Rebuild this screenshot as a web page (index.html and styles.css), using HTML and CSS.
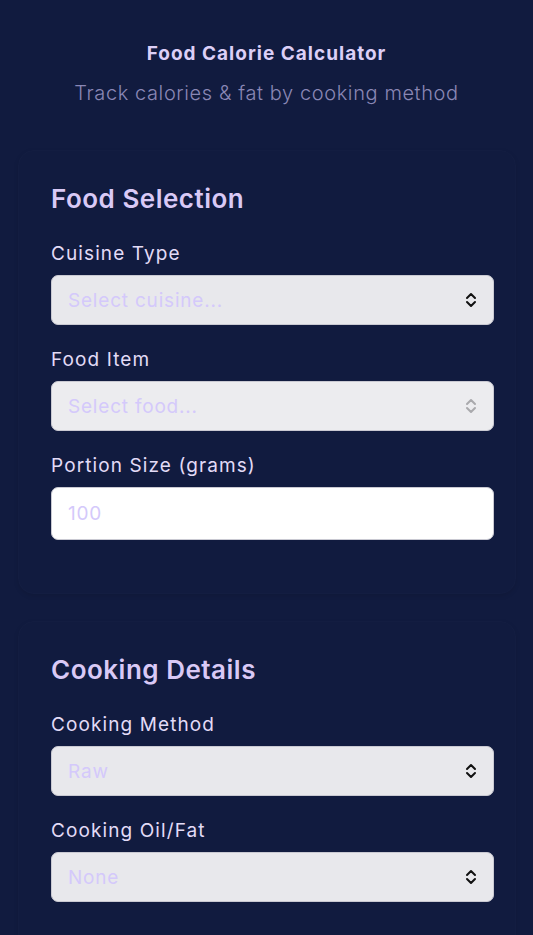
FILE: index.html
```html
<!DOCTYPE html>
<html lang="en">
<head>
    <meta charset="UTF-8">
    <meta name="viewport" content="width=device-width, initial-scale=1.0">
    <title>Food Calorie Calculator</title>
    <link rel="stylesheet" href="styles.css">
</head>
<body>

<div class="header">
    <h1>Food Calorie Calculator</h1>
    <p>Track calories &amp; fat by cooking method</p>
</div>

<div class="card">
    <h2>Food Selection</h2>
    <div class="form-group">
        <label for="cuisine">Cuisine Type</label>
        <div class="select-wrap">
            <select id="cuisine">
                <option value="">Select cuisine...</option>
            </select>
            <svg class="chevrons" width="12" height="16" viewBox="0 0 12 16"><path d="M2 6 L6 2 L10 6 M2 10 L6 14 L10 10" fill="none" stroke="#111" stroke-width="2" stroke-linecap="round" stroke-linejoin="round"/></svg>
        </div>
    </div>
    <div class="form-group">
        <label for="food">Food Item</label>
        <div class="select-wrap">
            <select id="food" disabled>
                <option value="">Select food...</option>
            </select>
            <svg class="chevrons" width="12" height="16" viewBox="0 0 12 16"><path d="M2 6 L6 2 L10 6 M2 10 L6 14 L10 10" fill="none" stroke="#a9a9ad" stroke-width="2" stroke-linecap="round" stroke-linejoin="round"/></svg>
        </div>
    </div>
    <div class="form-group">
        <label for="portion">Portion Size (grams)</label>
        <input type="number" id="portion" placeholder="100">
    </div>
</div>

<div class="card">
    <h2>Cooking Details</h2>
    <div class="form-group">
        <label for="method">Cooking Method</label>
        <div class="select-wrap">
            <select id="method">
                <option value="raw">Raw</option>
            </select>
            <svg class="chevrons" width="12" height="16" viewBox="0 0 12 16"><path d="M2 6 L6 2 L10 6 M2 10 L6 14 L10 10" fill="none" stroke="#111" stroke-width="2" stroke-linecap="round" stroke-linejoin="round"/></svg>
        </div>
    </div>
    <div class="form-group">
        <label for="oil">Cooking Oil/Fat</label>
        <div class="select-wrap">
            <select id="oil">
                <option value="none">None</option>
            </select>
            <svg class="chevrons" width="12" height="16" viewBox="0 0 12 16"><path d="M2 6 L6 2 L10 6 M2 10 L6 14 L10 10" fill="none" stroke="#111" stroke-width="2" stroke-linecap="round" stroke-linejoin="round"/></svg>
        </div>
    </div>
</div>

</body>
</html>
```

FILE: styles.css
```css
body {
    font-family: Inter, "Noto Sans", sans-serif;
    margin: 0;
    padding: 41px 0 40px;
    background-color: #111b3f;
    color: #e3dbf7;
}
.header {
    text-align: center;
    margin-bottom: 43px;
}
.header h1 {
    font-size: 19px;
    line-height: 26px;
    font-weight: 700;
    letter-spacing: 1px;
    color: #dccff7;
    margin: 0 0 12px;
}
.header p {
    font-size: 20px;
    line-height: 28px;
    font-weight: 300;
    letter-spacing: 0.6px;
    color: #8a87b5;
    margin: 0;
}
.card {
    margin: 0 17px 27px 18px;
    padding: 31px 21px 32px 32px;
    border: 1px solid rgba(255, 255, 255, 0.012);
    border-radius: 16px;
    box-shadow: 0 2px 5px rgba(0, 0, 0, 0.1);
}
.card h2 {
    font-size: 26px;
    line-height: 34px;
    font-weight: 600;
    letter-spacing: 0.5px;
    color: #d9c9f6;
    margin: 0 0 24px;
}
.form-group {
    margin-bottom: 21px;
}
label {
    display: block;
    font-size: 19px;
    line-height: 28px;
    letter-spacing: 1.1px;
    margin-bottom: 7px;
    color: #e3dbf7;
}
.select-wrap {
    position: relative;
}
select, input {
    display: block;
    width: 100%;
    box-sizing: border-box;
    font-family: inherit;
    font-size: 19px;
    letter-spacing: 0.8px;
    color: #d4c9fb;
    border: 1px solid #c9c9d2;
    border-radius: 7px;
    padding: 0 16px;
    outline: none;
}
select {
    appearance: none;
    -webkit-appearance: none;
    height: 50px;
    background-color: #e8e8ec;
}
select:disabled {
    background-color: #ececef;
    opacity: 1;
}
input {
    height: 53px;
    background-color: #ffffff;
}
input::placeholder {
    color: #d4c9fb;
}
.chevrons {
    position: absolute;
    right: 17px;
    top: 17px;
    pointer-events: none;
}
```
